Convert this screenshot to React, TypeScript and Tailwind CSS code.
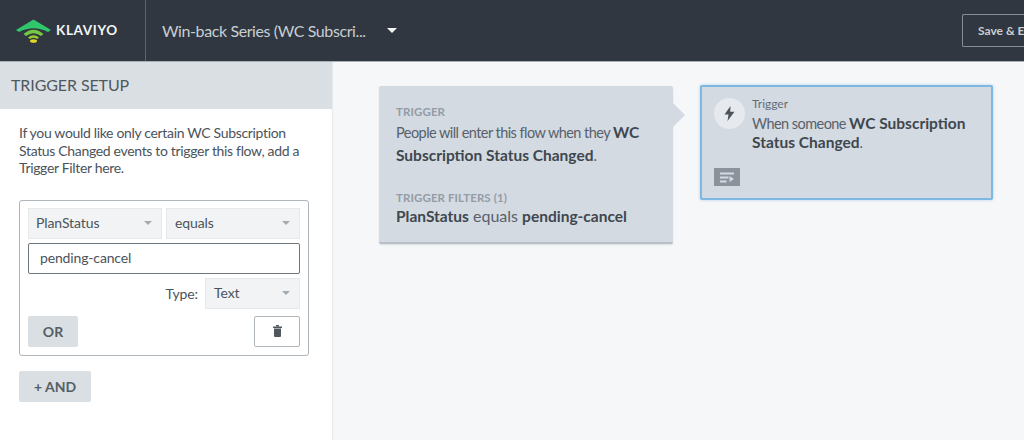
import React from "react";

const Caret = ({ className = "" }: { className?: string }) => (
  <span className={`w-0 h-0 border-x-[4px] border-x-transparent border-t-[4px] border-t-[#a3abb2] ${className}`} />
);

const Select = ({ label, className }: { label: string; className: string }) => (
  <div className={`h-[31px] bg-[#f1f3f5] border border-[#e6e9ec] flex items-center justify-between pr-[9px] pb-px text-[14px] tracking-[-0.1px] text-[#4b535b] ${className}`}>
    <span>{label}</span>
    <Caret />
  </div>
);

const reg = "text-[14.5px] tracking-[-0.55px] text-[#59616a]";
const strong = "text-[15.5px] tracking-normal font-bold text-[#3f474e]";

export default function App() {
  return (
    <div className="w-[1024px] h-[440px] overflow-hidden flex flex-col bg-white text-[#4b535b]" style={{ fontFamily: "Lato, 'Open Sans', sans-serif" }}>
      <header className="h-[62px] shrink-0 bg-[#303740] border-b border-[#a9b0b6] flex items-center">
        <div className="w-[146px] h-full shrink-0 border-r border-[#5b636b] flex items-center pl-[16px] gap-[5px]">
          <svg width="35" height="24" viewBox="0 0 35 24">
            <path d="M0 11 L17.5 0.5 L35 11 L32 13 Q17.5 5.5 3 13 Z" fill="#2fc76a" />
            <path d="M7.5 15 Q17.5 6.5 27.5 15 L25 17 Q17.5 11.5 10 17 Z" fill="#74c743" />
            <path d="M12 18.5 Q17.5 14 23 18.5 L21 20 Q17.5 17.5 14 20 Z" fill="#9ad02c" />
            <ellipse cx="17.5" cy="22" rx="3.5" ry="1.8" fill="#e2d92b" />
          </svg>
          <span className="text-[13.5px] font-bold tracking-[0.65px] text-[#f2f4f5]">KLAVIYO</span>
        </div>
        <div className="ml-4 flex items-center w-[235px] justify-between text-[16px] tracking-[-0.4px] text-[#c9ced2]">
          <span className="whitespace-nowrap">Win-back Series (WC Subscri...</span>
          <span className="w-0 h-0 border-x-[5px] border-x-transparent border-t-[5px] border-t-[#f2f4f5]" />
        </div>
        <div className="ml-auto w-[62px] h-[33px] border border-[#848c94] border-r-0 rounded-l-[2px] pl-[15px] flex items-center overflow-hidden whitespace-nowrap text-[12px] font-bold text-[#c9ced2]">
          Save &amp; E
        </div>
      </header>

      <div className="flex-1 flex min-h-0">
        <aside className="w-[333px] shrink-0 border-r border-[#e6e9ec] flex flex-col">
          <div className="h-[47px] bg-[#d9dfe2] flex items-center pl-[11px] pb-[2px] text-[16px] tracking-[-0.1px] text-[#50585f]">TRIGGER SETUP</div>
          <div className="pl-[19px] pr-6 pt-[15px]">
            <p className="text-[14px] tracking-[-0.33px] leading-[17.5px] text-[#4b535b]">
              If you would like only certain WC Subscription Status Changed events to trigger this flow, add a Trigger Filter here.
            </p>
            <div className="mt-[23px] w-[290px] h-[156px] border border-[#aeb5bb] rounded-[3px] px-2 pt-[7px] flex flex-col">
              <div className="flex gap-1">
                <Select label="PlanStatus" className="w-[134px] pl-[7px]" />
                <Select label="equals" className="w-[134px] pl-2" />
              </div>
              <div className="mt-1 h-[31px] border border-[#6f777e] rounded-[2px] flex items-center pl-[11px] pb-px text-[14px] tracking-[-0.15px]">pending-cancel</div>
              <div className="mt-1 flex items-center justify-end gap-[7px] text-[14px] tracking-[-0.1px]">
                <span>Type:</span>
                <Select label="Text" className="w-[95px] pl-2" />
              </div>
              <div className="mt-[7px] flex items-center justify-between">
                <div className="w-[50px] h-[31px] bg-[#d9dfe2] rounded-[2px] flex items-center justify-center text-[14px] font-bold text-[#565e65]">OR</div>
                <div className="w-[46px] h-[31px] border border-[#aeb5bb] rounded-[2px] flex items-center justify-center">
                  <svg width="9" height="12" viewBox="0 0 9 12" fill="#50585f">
                    <rect x="0" y="1.5" width="9" height="1.5" />
                    <rect x="3" y="0" width="3" height="1.5" />
                    <path d="M1 3.5 H8 V11 Q8 12 7 12 H2 Q1 12 1 11 Z" />
                  </svg>
                </div>
              </div>
            </div>
            <div className="mt-[15px] w-[72px] h-[31px] bg-[#d9dfe2] rounded-[2px] flex items-center justify-center text-[14px] font-bold text-[#565e65]">+ AND</div>
          </div>
        </aside>

        <main className="flex-1 bg-[#f6f7f9] flex items-start pl-[46px] pt-[23px]">
          <div className="relative mt-px w-[294px] h-[158px] bg-[#d3dae2] rounded-[2px] border-b-2 border-[#b7bfc9] pl-[17px] pr-3 pt-[19px] shadow-[0_1px_2px_rgba(0,0,0,0.1)]">
            <span className="absolute left-full top-[17px] w-0 h-0 border-y-[12px] border-y-transparent border-l-[12px] border-l-[#d3dae2]" />
            <div className="text-[11.5px] tracking-[0.1px] leading-[14px] font-bold text-[#949ca6]">TRIGGER</div>
            <p className={`mt-[2px] leading-[23px] ${reg}`}>
              People will enter this flow when they <b className={strong}>WC Subscription Status Changed</b>.
            </p>
            <div className="mt-[24px] text-[11.5px] tracking-[0.1px] leading-[14px] font-bold text-[#949ca6]">TRIGGER FILTERS (1)</div>
            <p className="-mt-px leading-[23px] whitespace-nowrap text-[16px] text-[#59616a]">
              <b className={strong}>PlanStatus</b> equals <b className={strong}>pending-cancel</b>
            </p>
          </div>
          <div className="ml-[27px] w-[293px] h-[115px] bg-[#d3dae2] border-2 border-[#7db8e2] rounded-[2px] shadow-[0_0_3px_rgba(125,184,226,0.6)] pl-[12px] pt-[10px] flex flex-col">
            <div className="flex gap-[7px]">
              <div className="w-[31px] h-[31px] mt-px shrink-0 rounded-full bg-[#e6eaee] flex items-center justify-center">
                <svg width="11" height="15" viewBox="0 0 11 15" fill="#4b535b">
                  <path d="M6.5 0 L0.5 8.5 H4.5 L3.5 15 L10.5 5.8 H6.2 Z" />
                </svg>
              </div>
              <div className="min-w-0">
                <div className="text-[12px] leading-[14px] text-[#656d75]">Trigger</div>
                <p className={`mt-[3px] leading-[19px] ${reg}`}>
                  When someone <b className={`${strong} tracking-[-0.2px]`}>WC Subscription Status Changed</b>.
                </p>
              </div>
            </div>
            <div className="mt-auto mb-[12px] w-[26px] h-[18px] bg-[#8b929c] flex items-center justify-center">
              <svg width="14" height="11" viewBox="0 0 14 11" fill="#d3dae2">
                <rect x="0" y="0.5" width="14" height="2" />
                <rect x="0" y="4.5" width="8.5" height="2" />
                <rect x="0" y="8.5" width="6.5" height="2" />
                <path d="M9.5 4 L14 7 L9.5 10 Z" />
              </svg>
            </div>
          </div>
        </main>
      </div>
    </div>
  );
}
